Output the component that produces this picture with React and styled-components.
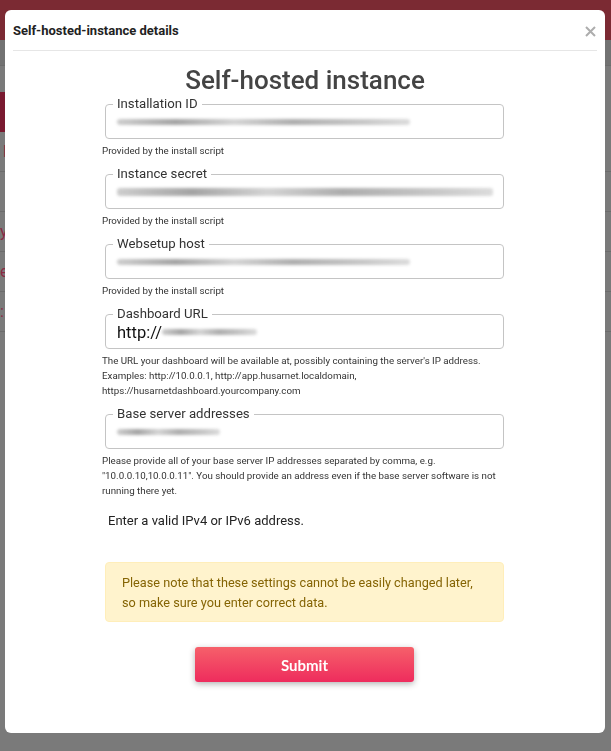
import styled, { createGlobalStyle } from "styled-components";

const GlobalStyle = createGlobalStyle`
    html, body {
        margin: 0;
        padding: 0;
        background: #7a7a7a;
        font-family: Roboto, "Liberation Sans", sans-serif;
    }
    * {
        box-sizing: border-box;
    }
`

// page behind the dimmed overlay
const Page = styled.div`
    width: 611px;
    height: 751px;
    overflow: hidden;
    background: #7a7a7a;
`

const TopBar = styled.div`
    height: 40px;
    background: #7b2a33;
`

const SubBar = styled.div`
    height: 26px;
    background: #727272;
    border-bottom: 1px solid #6c6c6c;
`

const RedBlock = styled.div`
    margin-top: 26px;
    width: 60px;
    height: 40px;
    background: #7a1a30;
`

const BackRow = styled.div`
    height: 40px;
    border-bottom: 1px solid #6c6c6c;
    color: #8a2a44;
    font-size: 16px;
    line-height: 40px;
    padding-left: ${p => p.$indent || 0}px;
`

const Overlay = styled.div`
    position: fixed;
    inset: 0;
    padding: 10px 6px 0 5px;
`

const Modal = styled.div`
    width: 600px;
    height: 723px;
    background: #fff;
    border-radius: 6px;
    display: flex;
    flex-direction: column;
`

const Header = styled.div`
    height: 41px;
    margin: 0 8px;
    border-bottom: 1px solid #e6e6e6;
    display: flex;
    align-items: center;
    justify-content: space-between;
`

const HeaderTitle = styled.h5`
    margin: 0;
    font-size: 13px;
    font-weight: 700;
    color: #222;
`

const Close = styled.svg`
    width: 11px;
    height: 11px;
    margin: 2px 1px 0 0;
`

const Body = styled.div`
    padding-top: 14px;
    display: flex;
    flex-direction: column;
`

const Title = styled.h2`
    margin: 0;
    text-align: center;
    font-size: 26px;
    line-height: 30px;
    font-weight: 500;
    color: #444;
`

const Form = styled.div`
    margin: 1px 0 0 97px;
    width: 403px;
    display: flex;
    flex-direction: column;
`

const Field = styled.fieldset`
    margin: ${p => (p.$first ? 0 : 8)}px 0 0 3px;
    width: 399px;
    padding: 0 7px;
    border: 1px solid #c4c4c4;
    border-radius: 4px;
    min-inline-size: 0;
`

const Label = styled.legend`
    padding: 0 4px;
    font-size: 13.2px;
    line-height: 16px;
    color: #333;
`

const InputArea = styled.div`
    height: 26px;
    padding: 0 0 6px 4px;
    display: flex;
    align-items: center;
    font-size: 16.5px;
    color: #111;
`

const Blur = styled.span`
    display: block;
    width: ${p => p.$w}px;
    height: ${p => p.$h || 6}px;
    border-radius: 3px;
    background: linear-gradient(90deg, #c8c8c8 0%, #9a9a9a 20%, #cfcfcf 40%, #a4a4a4 60%, #c2c2c2 85%, #d8d8d8 100%);
    filter: blur(1.4px);
    opacity: 0.9;
`

const Helper = styled.p`
    margin: 4px 0 0;
    font-size: 9.75px;
    line-height: 15px;
    color: #333;
`

const Hint = styled.p`
    margin: 15px 0 0 6px;
    font-size: 13px;
    line-height: 16px;
    color: #222;
`

const Warning = styled.div`
    margin: 33px 0 0 3px;
    width: 399px;
    padding: 10px 16px 8px;
    background: #fff3cd;
    border: 1px solid #ffeeba;
    border-radius: 4px;
    color: #856404;
    font-size: 12.7px;
    line-height: 20px;
`

const Submit = styled.button`
    align-self: center;
    margin: 25px 0 0 -1px;
    width: 219px;
    height: 35px;
    border: none;
    border-radius: 3px;
    background: linear-gradient(180deg, #f6606a 0%, #ee2c5d 100%);
    box-shadow: 0 2px 6px rgba(0, 0, 0, 0.3);
    color: #fff;
    font-family: Lato, "Open Sans", sans-serif;
    font-weight: 700;
    font-size: 15px;
`

const fields = [
    { label: "Installation ID", value: <Blur $w={293} /> },
    { label: "Instance secret", value: <Blur $w={376} $h={8} /> },
    { label: "Websetup host", value: <Blur $w={293} /> },
    { label: "Dashboard URL", value: <>http://<Blur $w={95} /></> },
]

const App = () => {
    return (
        <>
            <GlobalStyle />
            <Page>
                <TopBar />
                <SubBar />
                <RedBlock />
                <BackRow $indent={3}>l</BackRow>
                <BackRow />
                <BackRow>y</BackRow>
                <BackRow>e</BackRow>
                <BackRow>:</BackRow>
            </Page>
            <Overlay>
                <Modal>
                    <Header>
                        <HeaderTitle>Self-hosted-instance details</HeaderTitle>
                        <Close viewBox="0 0 11 11">
                            <path d="M1 1 L10 10 M10 1 L1 10" stroke="#adadad" strokeWidth="2" />
                        </Close>
                    </Header>
                    <Body>
                        <Title>Self-hosted instance</Title>
                        <Form>
                            {fields.map((f, i) => (
                                <div key={f.label}>
                                    <Field $first={i === 0}>
                                        <Label>{f.label}</Label>
                                        <InputArea>{f.value}</InputArea>
                                    </Field>
                                    {i < 3 && <Helper>Provided by the install script</Helper>}
                                </div>
                            ))}
                            <Helper>
                                The URL your dashboard will be available at, possibly containing the server's IP address.
                                Examples: http://10.0.0.1, http://app.husarnet.localdomain,
                                https://husarnetdashboard.yourcompany.com
                            </Helper>
                            <Field>
                                <Label>Base server addresses</Label>
                                <InputArea><Blur $w={103} /></InputArea>
                            </Field>
                            <Helper>
                                Please provide all of your base server IP addresses separated by comma, e.g.
                                "10.0.0.10,10.0.0.11". You should provide an address even if the base server software is not
                                running there yet.
                            </Helper>
                            <Hint>Enter a valid IPv4 or IPv6 address.</Hint>
                            <Warning>
                                Please note that these settings cannot be easily changed later,
                                so make sure you enter correct data.
                            </Warning>
                        </Form>
                        <Submit>Submit</Submit>
                    </Body>
                </Modal>
            </Overlay>
        </>
    )
}

export default App
